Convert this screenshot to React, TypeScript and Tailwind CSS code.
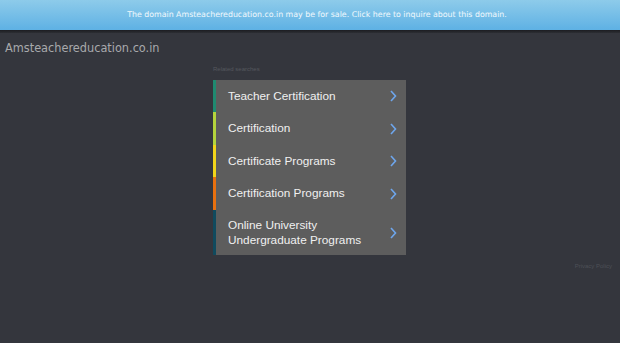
import React from "react";

const items = [
  { label: ["Teacher Certification"], color: "bg-[#1f8a70]", h: "h-[32px]" },
  { label: ["Certification"], color: "bg-[#b4d43c]", h: "h-[33px]" },
  { label: ["Certificate Programs"], color: "bg-[#f2d51a]", h: "h-[32px]" },
  { label: ["Certification Programs"], color: "bg-[#e8700f]", h: "h-[33px]" },
  { label: ["Online University", "Undergraduate Programs"], color: "bg-[#104a5e]", h: "h-[45px]" },
];

function Chevron() {
  return (
    <svg width="7" height="12" viewBox="0 0 7 12" className="shrink-0">
      <path d="M1 1 L5.5 6 L1 11" fill="none" stroke="#6ea6ec" strokeWidth="1.6" />
    </svg>
  );
}

export default function App() {
  return (
    <div className="w-[620px] h-[343px] bg-[#34363d] overflow-hidden" style={{ fontFamily: "Arial" }}>
      <div className="h-[30px] bg-gradient-to-b from-[#8dcbea] to-[#5eb1e4] flex items-center justify-center pl-[14px]">
        <div className="text-[7.85px] text-white/90 leading-none" style={{ fontFamily: "'DejaVu Sans', sans-serif" }}>
          The domain Amsteachereducation.co.in may be for sale. Click here to inquire about this domain.
        </div>
      </div>
      <div className="h-[3px] bg-gradient-to-b from-[#1c1d21] to-[#2c2e34]" />
      <div className="pl-[5px] pt-[8px] h-[30px]">
        <div className="text-[12.6px] text-[#a8a9ac] leading-[13px]" style={{ fontFamily: "'DejaVu Sans Condensed', 'DejaVu Sans', sans-serif" }}>
          Amsteachereducation.co.in
        </div>
      </div>
      <div className="ml-[213px] w-[193px]">
        <div className="text-[6px] text-[#55585e] leading-none h-[17px] pt-[3px]" style={{ fontFamily: "'Liberation Sans', sans-serif" }}>
          Related searches
        </div>
        <div className="bg-[#5d5d5d] flex flex-col">
          {items.map((it, i) => (
            <div key={i} className={`flex ${it.h}`}>
              <div className={`w-[3px] ${it.color}`} />
              <div className="flex-1 flex items-center justify-between pl-[12px] pr-[9px]">
                <div className="text-[11.8px] text-[#f0f0f0] leading-[15px]" style={{ fontFamily: "'Liberation Sans', Arial, sans-serif" }}>
                  {it.label.map((l, j) => (
                    <div key={j}>{l}</div>
                  ))}
                </div>
                <Chevron />
              </div>
            </div>
          ))}
        </div>
      </div>
      <div className="flex justify-end pr-[8px] pt-[8px]">
        <span className="text-[6px] text-[#4d5057] leading-none" style={{ fontFamily: "'Liberation Sans', sans-serif" }}>
          Privacy Policy
        </span>
      </div>
    </div>
  );
}
